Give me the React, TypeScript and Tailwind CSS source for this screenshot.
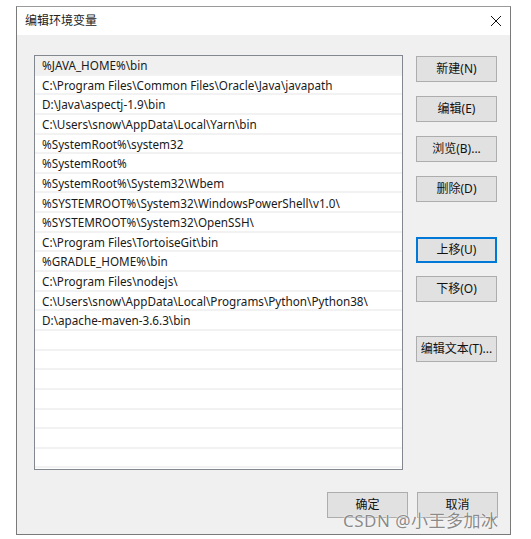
const paths = [
  '%JAVA_HOME%\\bin',
  'C:\\Program Files\\Common Files\\Oracle\\Java\\javapath',
  'D:\\Java\\aspectj-1.9\\bin',
  'C:\\Users\\snow\\AppData\\Local\\Yarn\\bin',
  '%SystemRoot%\\system32',
  '%SystemRoot%',
  '%SystemRoot%\\System32\\Wbem',
  '%SYSTEMROOT%\\System32\\WindowsPowerShell\\v1.0\\',
  '%SYSTEMROOT%\\System32\\OpenSSH\\',
  'C:\\Program Files\\TortoiseGit\\bin',
  '%GRADLE_HOME%\\bin',
  'C:\\Program Files\\nodejs\\',
  'C:\\Users\\snow\\AppData\\Local\\Programs\\Python\\Python38\\',
  'D:\\apache-maven-3.6.3\\bin',
]

const rows = [...paths, ...Array(21 - paths.length).fill('')]

const font = { fontFamily: '"Noto Sans", "Noto Sans CJK SC", sans-serif' }

const Btn = ({ label, focused, className = '' }: { label: string; focused?: boolean; className?: string }) => (
  <button
    className={`w-[81px] h-[26px] bg-[#e1e1e1] text-[12px] text-[#111] flex items-center justify-center ${
      focused ? 'border-2 border-[#0078d7]' : 'border border-[#adadad]'
    } ${className}`}
  >
    {label}
  </button>
)

export default function App() {
  return (
    <div className="w-[531px] h-[539px] bg-white relative overflow-hidden" style={font}>
      <div className="ml-[16px] mt-[6px] w-[495px] h-[529px] border border-[#7a7a7a] border-t-[#9a9a9a] flex flex-col">
        {/* Title bar */}
        <div className="h-[28px] bg-white flex items-center justify-between pl-[8px] pr-[6px]">
          <span className="text-[12px] text-[#222]">编辑环境变量</span>
          <svg width="12" height="12" viewBox="0 0 12 12" className="mr-[2px]">
            <path d="M1 1 L11 11 M11 1 L1 11" stroke="#111" strokeWidth="1" />
          </svg>
        </div>

        {/* Body */}
        <div className="flex-1 bg-[#f0f0f0] pt-[20px] pl-[17px] pr-[12px]">
          <div className="flex gap-[13px]">
            {/* List */}
            <div className="w-[369px] h-[415px] bg-white border border-[#828790] flex flex-col">
              {rows.map((p, i) => (
                <div
                  key={i}
                  className={`h-[19.65px] flex items-center pl-[7px] pt-[2px] text-[11.7px] text-[#1a1a1a] whitespace-nowrap border-b-2 border-[#f2f2f2] ${
                    i === 0 ? 'bg-[#f0f0f0]' : ''
                  }`}
                >
                  {p}
                </div>
              ))}
            </div>

            {/* Side buttons */}
            <div className="flex flex-col mt-[1px]">
              <Btn label="新建(N)" />
              <Btn label="编辑(E)" className="mt-[14px]" />
              <Btn label="浏览(B)..." className="mt-[14px]" />
              <Btn label="删除(D)" className="mt-[14px]" />
              <Btn label="上移(U)" focused className="mt-[35px]" />
              <Btn label="下移(O)" className="mt-[13px]" />
              <Btn label="编辑文本(T)..." className="mt-[34px]" />
            </div>
          </div>

          {/* Bottom buttons */}
          <div className="flex justify-end gap-[9px] mt-[22px]">
            <Btn label="确定" className="w-[80px]" />
            <Btn label="取消" />
          </div>
        </div>
      </div>

      {/* Watermark */}
      <div
        className="absolute left-[343px] top-[508px] text-[17px] text-[#8a8a8a] tracking-[0.5px]"
        style={{ textShadow: '0 0 2px #fff, 0 0 1px #fff' }}
      >
        CSDN @小王多加冰
      </div>
    </div>
  )
}
